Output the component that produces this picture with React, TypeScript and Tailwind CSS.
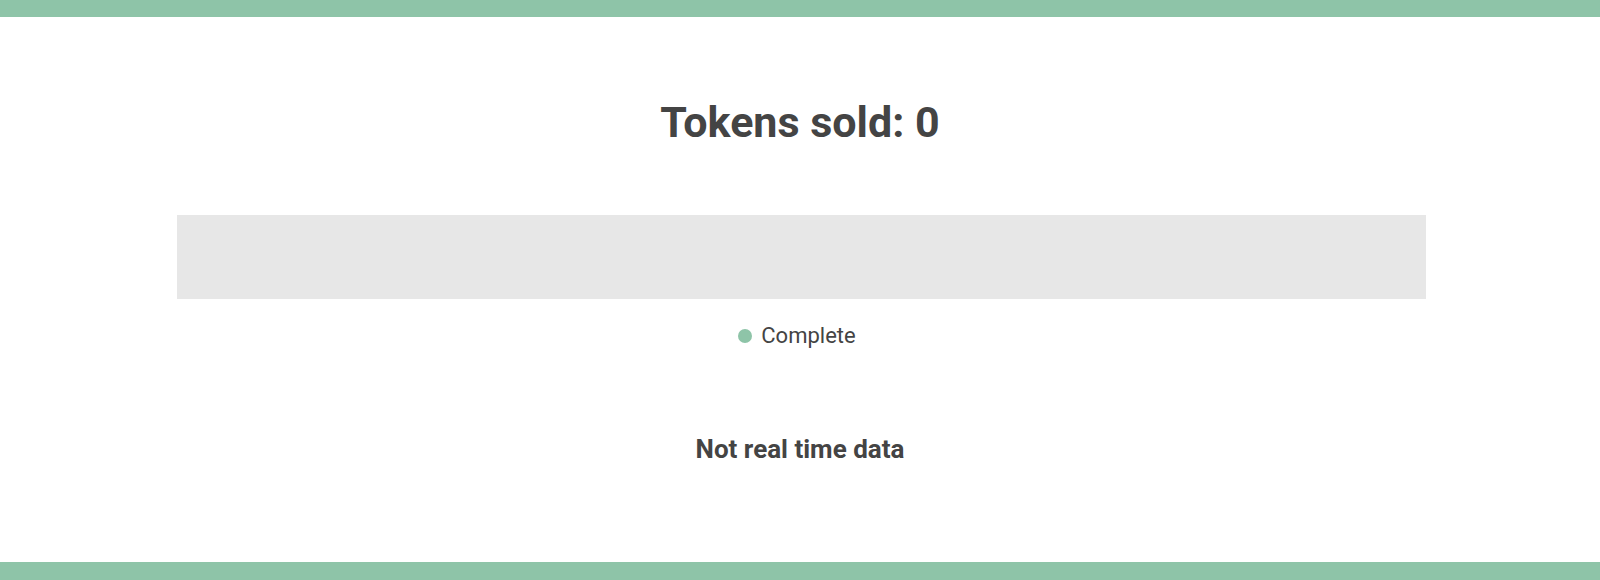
import React from "react";

export default function App() {
  return (
    <div
      className="w-[1600px] h-[580px] bg-white flex flex-col text-[#444444]"
      style={{ fontFamily: "Roboto, 'Liberation Sans', sans-serif" }}
    >
      <div className="h-[17px] bg-[#8ec4a8] shrink-0" />
      <div className="flex-1 flex flex-col items-center">
        <h1 className="mt-[80px] text-[43px] leading-[50px] font-bold">Tokens sold: 0</h1>
        <div className="mt-[68px] w-[1249px] h-[84px] bg-[#e7e7e7] ml-[2px]" />
        <div className="mt-[22px] flex items-center gap-[9px] mr-[8px]">
          <span className="w-[14px] h-[14px] rounded-full bg-[#8ec4a8] ml-[2px]" />
          <span className="text-[22px] leading-[30px] font-normal">Complete</span>
        </div>
        <div className="mt-[82px] text-[26px] leading-[32px] font-bold">Not real time data</div>
      </div>
      <div className="h-[18px] bg-[#8ec4a8] shrink-0" />
    </div>
  );
}
